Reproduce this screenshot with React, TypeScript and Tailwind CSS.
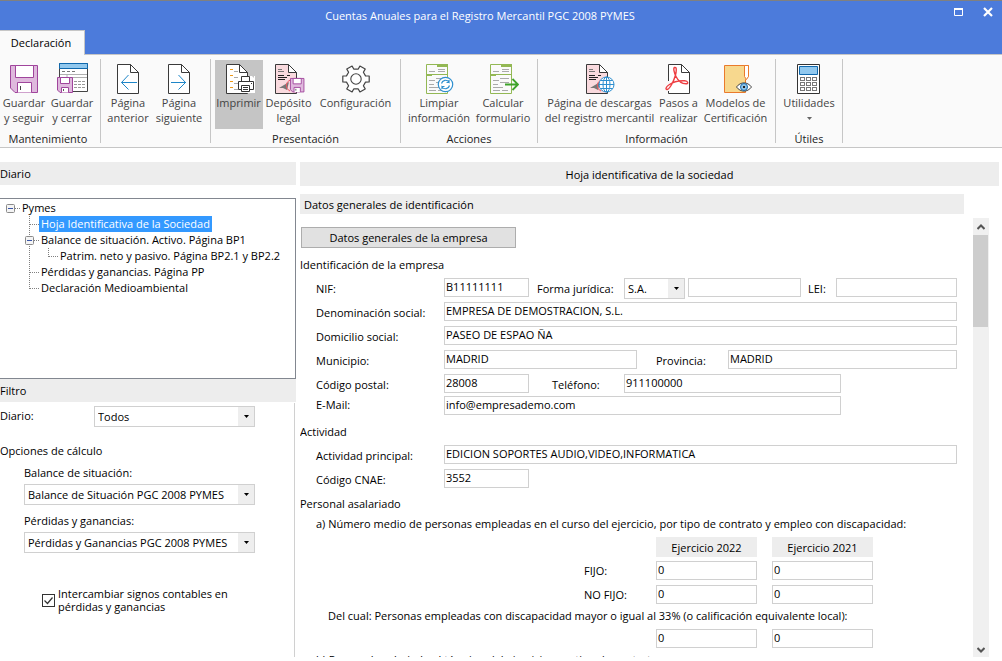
import { useState } from "react";
import type { ReactNode } from "react";

function Icon({ children }: { children: ReactNode }) {
  return (
    <svg width="32" height="32" viewBox="0 0 32 32" fill="none" aria-hidden="true">
      {children}
    </svg>
  );
}

function SmallFloppy({ x, y }: { x: number; y: number }) {
  return (
    <g transform={`translate(${x} ${y})`} stroke="#a0459c">
      <path d="M.5.5h15v15H3L.5 13Z" fill="#dfb9dd" />
      <path d="M3.500.5h9v6h-9ZM4.500 15.500v-5h7v5" fill="#fff" />
      <path d="M6.500 12v2" stroke="#555" />
    </g>
  );
}

function SaveIcon() {
  return (
    <Icon>
      <g stroke="#a0459c">
        <path d="M2.500 2.500h27v27H7L2.500 25Z" fill="#dfb9dd" />
        <path d="M7.500 2.500h18v12h-18Z" fill="#fff" />
        <path d="M9.500 29.500v-10h14v10" fill="#fff" />
      </g>
      <path d="M12.500 23v4" stroke="#444" />
    </Icon>
  );
}

function SaveCloseIcon() {
  return (
    <Icon>
      <path d="M3.500.5h28v28h-28Z" fill="#fff" stroke="#444" />
      <path d="M3.500.5h28v5h-28Z" fill="#91c8ee" stroke="#0f68ad" />
      <path d="M6 8.500h3m2 0h3m2 0h3" stroke="#777" />
      <path d="M4 11.500h27M11 11.500v4M11 14.500h20" stroke="#b0b0b0" />
      <path
        d="M18 18.500h3m1 0h3m1 0h3M18 21.500h3m1 0h3m1 0h3M18 24.500h3m1 0h3m1 0h3"
        stroke="#999"
      />
      <SmallFloppy x={1} y={14} />
    </Icon>
  );
}

function Page({ x = 5, fill = "#fff" }: { x?: number; fill?: string }) {
  return (
    <g transform={`translate(${x} 0)`} stroke="#3a3a3a">
      <path d="M.5 1.500h13l8 8v21H.5Z" fill={fill} />
      <path d="M13.500 1.500v8h8Z" fill="#fff" />
    </g>
  );
}

function PrevPageIcon() {
  return (
    <Icon>
      <Page />
      <path d="M25 19.500H9.500M16.500 12 9.500 19.500l7 7" stroke="#1e86c8" />
    </Icon>
  );
}

function NextPageIcon() {
  return (
    <Icon>
      <Page />
      <path d="M8 19.500h15M15.500 12l7 7.500-7 7" stroke="#1e86c8" />
    </Icon>
  );
}

function PrintIcon() {
  return (
    <Icon>
      <Page x={3} />
      <path d="M7 6.500h3M7 12.500h3M7 18.500h3M7 24.500h3" stroke="#ef9a1a" />
      <path d="M11 8.500h4M11 14.500h4M11 20.500h4M11 26.500h4" stroke="#aaa" />
      <path d="M15 13h17v17H15Z" fill="#fff" />
      <path d="M25 10v-1l6 6v16h-6v-1h6V13h-6Z" fill="#c5c5c5" />
      <g stroke="#333" fill="#fff">
        <path d="M18.500 18.500v-5h8v5" />
        <path d="M15.500 18.500h15v8h-15Z" />
        <path d="M18.500 22.500h8v6h-8Z" />
        <path d="M20 24.500h5M20 26.500h5M28 20.500h1" />
      </g>
    </Icon>
  );
}

function CertifiedPage() {
  return (
    <>
      <Page x={2} fill="#f9dade" />
      <path d="M5 6.500h4M5 8.500h6" stroke="#777" />
      <path d="M5 12.500h6M5 14.500h9M5 16.500h7M14 12.500h3" stroke="#222" />
      <path d="m6 25 10-6-2 8-4-2Z" fill="#777" />
      <path d="M18 17c-6 1-6 9-1 11" stroke="#ee5560" />
    </>
  );
}

function DepositIcon() {
  return (
    <Icon>
      <CertifiedPage />
      <g transform="translate(17 15) scale(.9)">
        <SmallFloppy x={0} y={0} />
      </g>
    </Icon>
  );
}

const gearPoints = Array.from({ length: 6 }, (_, i) => {
  const corners = [
    [10, -18],
    [13.5, -13],
    [13.5, 13],
    [10, 18],
  ];
  return corners
    .map(([r, deg]) => {
      const a = ((i * 60 + deg) * Math.PI) / 180;
      return `${(16 + r * Math.cos(a)).toFixed(1)},${(16 + r * Math.sin(a)).toFixed(1)}`;
    })
    .join(" ");
}).join(" ");

function GearIcon() {
  return (
    <Icon>
      <polygon points={gearPoints} fill="#fff" stroke="#444" strokeWidth="1.2" strokeLinejoin="round" />
      <circle cx="16" cy="16" r="5.2" stroke="#444" strokeWidth="1.1" />
    </Icon>
  );
}

function FormSheet() {
  return (
    <>
      <path d="M3.500 1.500h21v29h-21Z" fill="#fafafa" stroke="#93b854" />
      <path d="M14 1h11v3H14ZM3 11h22v1H3ZM3 11h6v2H3Z" fill="#93b854" />
      <path d="M15 6.500h7M6 8.500h6M15 8.500h7" stroke="#aaa" />
      <path
        d="M13 15.500h9M6 17.500h6M13 19.500h9M6 21.500h5M6 24.500h10M6 27.500h7M15 27.500h6"
        stroke="#aaa"
      />
    </>
  );
}

function CleanIcon() {
  return (
    <Icon>
      <FormSheet />
      <circle cx="22.500" cy="21.500" r="7.2" fill="#fff" stroke="#2e8fcf" strokeWidth="1.2" />
      <path
        d="M18.500 20.500a4.200 4.200 0 0 1 7.500-1.500v-2m0 2.500h-2.500M26.500 22.500a4.200 4.200 0 0 1-7.500 1.500v2m0-2.500h2.500"
        stroke="#2e8fcf"
        strokeWidth="1.2"
      />
    </Icon>
  );
}

function CalculateIcon() {
  return (
    <Icon>
      <FormSheet />
      <path d="M18 21.500h13M25.500 16l5.500 5.500-5.500 5.500" stroke="#3fa32b" strokeWidth="1.8" />
    </Icon>
  );
}

function DownloadPageIcon() {
  return (
    <Icon>
      <CertifiedPage />
      <g stroke="#2e8fcf">
        <circle cx="22.500" cy="21.500" r="7.500" fill="#fff" />
        <ellipse cx="22.500" cy="21.500" rx="3.500" ry="7.500" />
        <path d="M22.500 14v15M15 21.500h15M16.500 17.500h12M16.500 25.500h12" />
      </g>
    </Icon>
  );
}

function PdfIcon() {
  return (
    <Icon>
      <Page />
      <path d="M3 18h4v10H3Z" fill="#fafafa" />
      <path
        d="M11.500 4.500c2.500-1 2 4 .7 8.500-1.500 5-5 12.500-8 13.500-2 .3-1.500-2.500 1.500-4.500 4-2.800 11-4.500 16-4.200 3.500.3 4 3 1.300 3-4 0-8-3.300-10-7.300-1.800-3.500-3-8.300-1.500-9Z"
        stroke="#ee3e42"
        strokeWidth="1.400"
      />
    </Icon>
  );
}

function ModelsIcon() {
  return (
    <Icon>
      <path d="M4.500 2.500h24v11l-3 3v13h-21Z" fill="#f7d88e" stroke="#ea7a2c" />
      <path d="M24.500 2.500h4v11l-2 3-2-3Z" fill="#fff" stroke="#ea7a2c" />
      <path d="M16.500 24c4-5.500 11-5.500 15 0-4 5.500-11 5.500-15 0Z" fill="#fff" stroke="#444" />
      <circle cx="24" cy="24" r="3.500" fill="#8ec5ec" stroke="#1769a8" />
      <path d="M23 23h2v2h-2Z" fill="#222" />
    </Icon>
  );
}

function CalculatorIcon() {
  return (
    <Icon>
      <path d="M4.500 1.500h22v29h-22Z" fill="#fff" stroke="#333" />
      <path d="M6.500 3.500h18v8h-18Z" fill="#91c8ee" stroke="#0f68ad" />
      {[14.5, 19.5, 24.5].map((y) =>
        [7.5, 13.5, 19.5].map((x) => (
          <rect key={`${x}-${y}`} x={x} y={y} width="4" height="3" stroke="#777" />
        ))
      )}
    </Icon>
  );
}

interface RibbonButtonProps {
  icon: ReactNode;
  lines: string[];
  width: string;
  active?: boolean;
  menu?: boolean;
}

function RibbonButton({ icon, lines, width, active, menu }: RibbonButtonProps) {
  return (
    <button
      type="button"
      className={`flex h-[69px] flex-col items-center whitespace-nowrap pt-[3px] leading-[15px] text-[#444] ${width} ${
        active ? "bg-[#c5c5c5]" : "hover:bg-[#e4e4e4]"
      }`}
    >
      {icon}
      {lines.map((line) => (
        <span key={line}>{line}</span>
      ))}
      {menu && (
        <svg width="5" height="3" viewBox="0 0 5 3" className="mt-[7px]" aria-hidden="true">
          <path d="M0 0h5L2.500 3Z" fill="#666" />
        </svg>
      )}
    </button>
  );
}

function RibbonGroup({
  label,
  width,
  children,
}: {
  label?: string;
  width: string;
  children: ReactNode;
}) {
  return (
    <section
      aria-label={label}
      className={`flex h-[84px] shrink-0 flex-col border-r border-[#c6c6c6] pt-px ${width}`}
    >
      <div className="flex justify-center">{children}</div>
      <div className="pt-0.5 text-center leading-4 text-[#222]">{label}</div>
    </section>
  );
}

function Ribbon() {
  return (
    <div className="flex h-[93px] shrink-0 border-b border-[#c6c6c6] bg-[#fafafa] pt-1">
      <RibbonGroup label="Mantenimiento" width="w-[101px] pr-1">
        <RibbonButton icon={<SaveIcon />} lines={["Guardar", "y seguir"]} width="w-12" />
        <RibbonButton icon={<SaveCloseIcon />} lines={["Guardar", "y cerrar"]} width="w-12" />
      </RibbonGroup>
      <RibbonGroup width="w-[110px] pr-1">
        <RibbonButton icon={<PrevPageIcon />} lines={["Página", "anterior"]} width="w-[51px]" />
        <RibbonButton icon={<NextPageIcon />} lines={["Página", "siguiente"]} width="w-[51px]" />
      </RibbonGroup>
      <RibbonGroup label="Presentación" width="w-[190px]">
        <RibbonButton icon={<PrintIcon />} lines={["Imprimir"]} width="w-12" active />
        <RibbonButton icon={<DepositIcon />} lines={["Depósito", "legal"]} width="w-[52px]" />
        <RibbonButton icon={<GearIcon />} lines={["Configuración"]} width="w-[82px]" />
      </RibbonGroup>
      <RibbonGroup label="Acciones" width="w-[137px]">
        <RibbonButton icon={<CleanIcon />} lines={["Limpiar", "información"]} width="w-[68px]" />
        <RibbonButton icon={<CalculateIcon />} lines={["Calcular", "formulario"]} width="w-[60px]" />
      </RibbonGroup>
      <RibbonGroup label="Información" width="w-[238px]">
        <RibbonButton
          icon={<DownloadPageIcon />}
          lines={["Página de descargas", "del registro mercantil"]}
          width="w-[114px]"
        />
        <RibbonButton icon={<PdfIcon />} lines={["Pasos a", "realizar"]} width="w-11" />
        <RibbonButton icon={<ModelsIcon />} lines={["Modelos de", "Certificación"]} width="w-[70px]" />
      </RibbonGroup>
      <RibbonGroup label="Útiles" width="w-[67px]">
        <RibbonButton icon={<CalculatorIcon />} lines={["Utilidades"]} width="w-[60px]" menu />
      </RibbonGroup>
    </div>
  );
}

type Branch = "root" | "tee" | "box" | "line" | "end";

const tree: { label: string; branches: Branch[] }[] = [
  { label: "Pymes", branches: ["root"] },
  { label: "Hoja Identificativa de la Sociedad", branches: ["tee"] },
  { label: "Balance de situación. Activo. Página BP1", branches: ["box"] },
  { label: "Patrim. neto y pasivo. Página BP2.1 y BP2.2", branches: ["line", "end"] },
  { label: "Pérdidas y ganancias. Página PP", branches: ["tee"] },
  { label: "Declaración Medioambiental", branches: ["end"] },
];

function TreeBranch({ kind }: { kind: Branch }) {
  const boxed = kind === "root" || kind === "box";
  return (
    <svg width="19" height="16" viewBox="0 0 19 16" className="shrink-0" aria-hidden="true">
      <g stroke="#808080" strokeDasharray="1 1">
        {kind !== "root" && <path d={kind === "end" ? "M7.500 0v9" : "M7.500 0v16"} />}
        {kind !== "line" && <path d="M8 8.500h9" />}
      </g>
      {boxed && (
        <>
          <rect x="3.500" y="4.500" width="8" height="8" rx="1" fill="#f4f4f4" stroke="#8a8a8a" />
          <path d="M5 8.500h5" stroke="#3a55a8" />
        </>
      )}
    </svg>
  );
}

function Tree() {
  const [selected, setSelected] = useState("Hoja Identificativa de la Sociedad");

  return (
    <ul className="mt-[13px] h-[181px] shrink-0 border border-l-0 border-[#828790] pt-px pl-[3px]">
      {tree.map(({ label, branches }, row) => (
        <li key={label} className={`flex h-4 ${row > 0 ? "pl-[19px]" : ""}`}>
          {branches.map((kind, i) => (
            <TreeBranch key={i} kind={kind} />
          ))}
          <button
            type="button"
            onClick={() => setSelected(label)}
            className={`-ml-0.5 px-0.5 leading-4 whitespace-nowrap ${
              selected === label ? "bg-[#3399ff] text-white" : ""
            }`}
          >
            {label}
          </button>
        </li>
      ))}
    </ul>
  );
}

function Select({ id, value, width }: { id: string; value: string; width: string }) {
  return (
    <div className={`relative h-[21px] shrink-0 ${width}`}>
      <select
        id={id}
        className="h-full w-full appearance-none border border-[#d0d0d0] bg-white pt-0.5 pr-4 pl-[3px]"
      >
        <option>{value}</option>
      </select>
      <span className="pointer-events-none absolute top-px right-px bottom-px flex w-4 items-center justify-center bg-[#eee]">
        <svg width="5" height="3" viewBox="0 0 5 3" aria-hidden="true">
          <path d="M0 0h5L2.500 3Z" fill="#000" />
        </svg>
      </span>
    </div>
  );
}

function Sidebar() {
  return (
    <aside className="flex w-[296px] shrink-0 flex-col">
      <h2 className="h-[23px] shrink-0 bg-[#ededed] leading-[23px]">Diario</h2>
      <Tree />
      <h2 className="h-[23px] shrink-0 bg-[#ededed] leading-[23px]">Filtro</h2>
      <div className="mt-px mr-px flex-1 border-r border-[#d0d0d0] pt-[3px]">
        <div className="flex">
          <label htmlFor="diario" className="w-[94px] leading-5">
            Diario:
          </label>
          <Select id="diario" value="Todos" width="w-[161px]" />
        </div>
        <h3 className="mt-4 leading-4">Opciones de cálculo</h3>
        <div className="pt-1.5 pl-6">
          <label htmlFor="balance" className="block h-[19px] leading-4">
            Balance de situación:
          </label>
          <Select id="balance" value="Balance de Situación PGC 2008 PYMES" width="w-[231px]" />
          <label htmlFor="perdidas" className="mt-2 block h-[19px] leading-4">
            Pérdidas y ganancias:
          </label>
          <Select id="perdidas" value="Pérdidas y Ganancias PGC 2008 PYMES" width="w-[231px]" />
        </div>
        <label className="mt-[34px] ml-[42px] flex items-center gap-[3px] leading-[13px]">
          <input
            type="checkbox"
            defaultChecked
            className="peer size-[13px] shrink-0 appearance-none border border-[#333] bg-white"
          />
          <svg
            width="13"
            height="13"
            viewBox="0 0 13 13"
            fill="none"
            className="pointer-events-none invisible -ml-4 shrink-0 peer-checked:visible"
            aria-hidden="true"
          >
            <path d="m2.500 6.500 3 3 5-6" stroke="#333" strokeWidth="1.200" />
          </svg>
          <span>
            Intercambiar signos contables en
            <br />
            pérdidas y ganancias
          </span>
        </label>
      </div>
    </aside>
  );
}

function TextBox({ id, value, width, label }: { id?: string; value?: string; width: string; label?: string }) {
  return (
    <input
      id={id}
      type="text"
      aria-label={label}
      defaultValue={value}
      className={`block h-[19px] border border-[#d0d0d0] bg-white px-px pb-0.5 ${width}`}
    />
  );
}

function Field({ id, label, width, children }: { id: string; label: string; width: string; children: ReactNode }) {
  return (
    <>
      <label htmlFor={id} className={`shrink-0 leading-[22px] ${width}`}>
        {label}
      </label>
      {children}
    </>
  );
}

const th = "h-5 bg-[#ededed] p-0 pt-0.5 text-center font-normal";

function StaffTable() {
  const rows = [
    { label: "FIJO:", name: "Fijo" },
    { label: "NO FIJO:", name: "No fijo" },
  ];
  return (
    <table className="mt-[5px] w-[573px] table-fixed border-collapse">
      <colgroup>
        <col className="w-[356px]" />
        <col className="w-[101px]" />
        <col className="w-[15px]" />
        <col className="w-[101px]" />
      </colgroup>
      <thead>
        <tr>
          <td />
          <th scope="col" className={th}>
            Ejercicio 2022
          </th>
          <td />
          <th scope="col" className={th}>
            Ejercicio 2021
          </th>
        </tr>
      </thead>
      <tbody>
        {rows.map(({ label, name }) => (
          <tr key={label} className="h-6">
            <th scope="row" className="p-0 pt-[5px] pl-[284px] text-left font-normal">
              {label}
            </th>
            <td className="p-0 pt-1 align-top">
              <TextBox value="0" width="w-full" label={`${name} 2022`} />
            </td>
            <td />
            <td className="p-0 pt-1 align-top">
              <TextBox value="0" width="w-full" label={`${name} 2021`} />
            </td>
          </tr>
        ))}
        <tr className="h-5">
          <th scope="row" colSpan={4} className="p-0 pt-0.5 pl-7 text-left font-normal">
            Del cual: Personas empleadas con discapacidad mayor o igual al 33% (o calificación
            equivalente local):
          </th>
        </tr>
        <tr className="h-6">
          <td />
          <td className="p-0 pt-1 align-top">
            <TextBox value="0" width="w-full" label="Discapacidad 2022" />
          </td>
          <td />
          <td className="p-0 pt-1 align-top">
            <TextBox value="0" width="w-full" label="Discapacidad 2021" />
          </td>
        </tr>
      </tbody>
    </table>
  );
}

function CompanyForm() {
  return (
    <form className="min-w-0 flex-1 overflow-hidden pt-[9px]">
      <button
        type="button"
        className="ml-px block h-[21px] w-[215px] border border-[#adadad] bg-[#e1e1e1] pt-px"
      >
        Datos generales de la empresa
      </button>

      <h3 className="mt-2 mb-1.5 h-4 leading-[18px]">Identificación de la empresa</h3>
      <div className="flex flex-col pr-4 pl-4">
        <div className="flex h-6">
          <Field id="nif" label="NIF:" width="w-32">
            <TextBox id="nif" value="B11111111" width="w-[85px]" />
          </Field>
          <Field id="forma" label="Forma jurídica:" width="ml-2 w-[87px]">
            <Select id="forma" value="S.A." width="w-[61px]" />
          </Field>
          <TextBox width="ml-[3px] w-[113px]" label="Otra forma jurídica" />
          <Field id="lei" label="LEI:" width="ml-[7px] w-7">
            <TextBox id="lei" width="min-w-0 flex-1" />
          </Field>
        </div>
        <div className="flex h-6">
          <Field id="denominacion" label="Denominación social:" width="w-32">
            <TextBox id="denominacion" value="EMPRESA DE DEMOSTRACION, S.L." width="min-w-0 flex-1" />
          </Field>
        </div>
        <div className="flex h-6">
          <Field id="domicilio" label="Domicilio social:" width="w-32">
            <TextBox id="domicilio" value="PASEO DE ESPAO ÑA" width="min-w-0 flex-1" />
          </Field>
        </div>
        <div className="flex h-6">
          <Field id="municipio" label="Municipio:" width="w-32">
            <TextBox id="municipio" value="MADRID" width="w-[193px]" />
          </Field>
          <Field id="provincia" label="Provincia:" width="ml-[19px] w-[72px]">
            <TextBox id="provincia" value="MADRID" width="min-w-0 flex-1" />
          </Field>
        </div>
        <div className="flex h-[22px]">
          <Field id="cp" label="Código postal:" width="w-32">
            <TextBox id="cp" value="28008" width="w-[85px]" />
          </Field>
          <Field id="telefono" label="Teléfono:" width="ml-[23px] w-[72px]">
            <TextBox id="telefono" value="911100000" width="w-[217px]" />
          </Field>
        </div>
        <div className="flex h-6">
          <label htmlFor="email" className="w-32 leading-[18px]">
            E-Mail:
          </label>
          <TextBox id="email" value="info@empresademo.com" width="w-[397px]" />
        </div>
      </div>

      <h3 className="mt-1 mb-[5px] h-4 leading-4">Actividad</h3>
      <div className="flex flex-col pr-4 pl-4">
        <div className="flex h-6">
          <Field id="actividad" label="Actividad principal:" width="w-32">
            <TextBox
              id="actividad"
              value="EDICION SOPORTES AUDIO,VIDEO,INFORMATICA"
              width="min-w-0 flex-1"
            />
          </Field>
        </div>
        <div className="flex h-6">
          <Field id="cnae" label="Código CNAE:" width="w-32">
            <TextBox id="cnae" value="3552" width="w-[85px]" />
          </Field>
        </div>
      </div>

      <h3 className="mt-[3px] h-4 leading-4">Personal asalariado</h3>
      <p className="mt-1 h-4 pl-4 leading-4 whitespace-nowrap">
        a) Número medio de personas empleadas en el curso del ejercicio, por tipo de contrato y empleo
        con discapacidad:
      </p>
      <StaffTable />
      <p className="mt-[3px] h-4 pl-4 leading-4 whitespace-nowrap">
        b) Personal asalariado al término del ejercicio, por tipo de contrato y por sexo:
      </p>
    </form>
  );
}

function ScrollBar() {
  return (
    <div className="mr-[13px] flex w-4 shrink-0 flex-col bg-[#f0f0f0]">
      <button type="button" aria-label="Subir" className="flex h-[17px] items-center justify-center">
        <svg width="8" height="6" viewBox="0 0 8 6" fill="none">
          <path d="m.5 5 3.500-3.500L7.500 5" stroke="#555" strokeWidth="2" />
        </svg>
      </button>
      <div className="mr-px h-[92px] bg-[#cdcdcd]" />
      <button
        type="button"
        aria-label="Bajar"
        className="mt-auto flex h-[15px] items-center justify-center"
      >
        <svg width="8" height="6" viewBox="0 0 8 6" fill="none">
          <path d="m.5 1 3.500 3.500L7.500 1" stroke="#555" strokeWidth="2" />
        </svg>
      </button>
    </div>
  );
}

export default function App() {
  return (
    <div className="flex h-screen flex-col overflow-hidden bg-white pb-1 font-['Open_Sans','Noto_Sans',sans-serif] text-[11px] text-black">
      <header className="relative flex h-[55px] shrink-0 items-end border-t border-b border-t-[#808080] border-b-[#c6c6c6] bg-[#4c7bdb]">
        <button
          type="button"
          className="-mb-px h-[25px] w-[85px] border-t border-r border-[#c6c6c6] bg-[#fafafa] pr-0.5"
        >
          Declaración
        </button>
        <h1 className="absolute inset-x-0 top-1.5 text-center leading-[18px] text-white pr-[42px]">
          Cuentas Anuales para el Registro Mercantil PGC 2008 PYMES
        </h1>
        <div className="absolute top-1.5 right-[9px] flex gap-[19px]">
          <button type="button" aria-label="Maximizar">
            <svg width="10" height="10" viewBox="0 0 10 10" fill="none">
              <path d="M.5 1.500h8v7h-8Z" stroke="#fff" />
              <path d="M0 1h9v2H0Z" fill="#fff" />
            </svg>
          </button>
          <button type="button" aria-label="Cerrar">
            <svg width="10" height="10" viewBox="0 0 10 10" fill="none">
              <path d="m1 1 8 8M9 1 1 9" stroke="#fff" strokeWidth="2.200" />
            </svg>
          </button>
        </div>
      </header>
      <Ribbon />
      <div className="flex min-h-0 flex-1 gap-1 pt-3.5">
        <Sidebar />
        <main className="flex min-w-0 flex-1 flex-col">
          <h2 className="mr-[3px] h-6 shrink-0 bg-[#ededed] text-center leading-[26px]">
            Hoja identificativa de la sociedad
          </h2>
          <h3 className="mt-2 mr-[38px] h-5 shrink-0 bg-[#ededed] pl-1 leading-[22px]">
            Datos generales de identificación
          </h3>
          <div className="flex min-h-0 flex-1 pt-1">
            <CompanyForm />
            <ScrollBar />
          </div>
        </main>
      </div>
    </div>
  );
}
